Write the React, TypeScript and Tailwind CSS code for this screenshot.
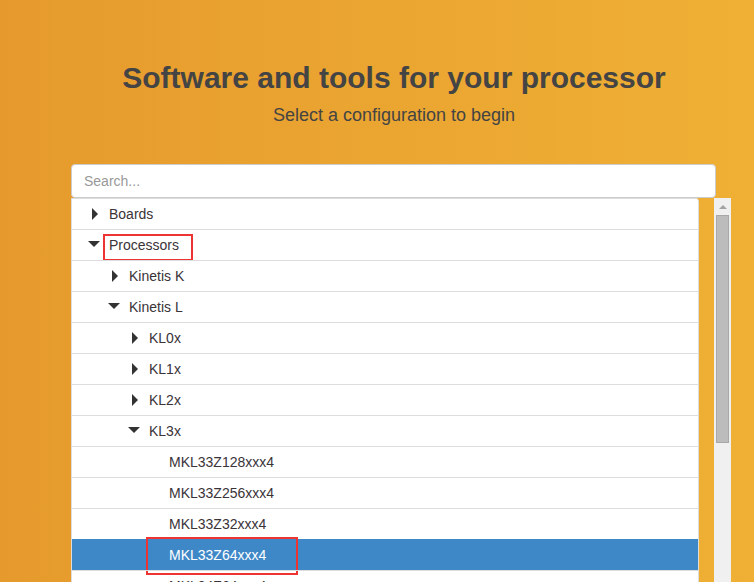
import React from 'react'

type Row = {
  label: string
  level: number
  kind: 'closed' | 'open' | 'leaf'
  selected?: boolean
  marked?: boolean
}

const rows: Row[] = [
  { label: 'Boards', level: 0, kind: 'closed' },
  { label: 'Processors', level: 0, kind: 'open', marked: true },
  { label: 'Kinetis K', level: 1, kind: 'closed' },
  { label: 'Kinetis L', level: 1, kind: 'open' },
  { label: 'KL0x', level: 2, kind: 'closed' },
  { label: 'KL1x', level: 2, kind: 'closed' },
  { label: 'KL2x', level: 2, kind: 'closed' },
  { label: 'KL3x', level: 2, kind: 'open' },
  { label: 'MKL33Z128xxx4', level: 3, kind: 'leaf' },
  { label: 'MKL33Z256xxx4', level: 3, kind: 'leaf' },
  { label: 'MKL33Z32xxx4', level: 3, kind: 'leaf' },
  { label: 'MKL33Z64xxx4', level: 3, kind: 'leaf', selected: true, marked: true },
  { label: 'MKL34Z64xxx4', level: 3, kind: 'leaf' },
]

const pad = ['pl-[12px]', 'pl-[32px]', 'pl-[52px]', 'pl-[72px]']

function Caret({ kind }: { kind: Row['kind'] }) {
  return (
    <span className="w-[25px] shrink-0 flex items-center">
      {kind === 'closed' && (
        <span className="ml-[8px] block w-0 h-0 border-y-[6px] border-y-transparent border-l-[6px] border-l-[#333]" />
      )}
      {kind === 'open' && (
        <span className="ml-[4px] mt-[-2px] block w-0 h-0 border-x-[6px] border-x-transparent border-t-[6px] border-t-[#333]" />
      )}
    </span>
  )
}

function TreeRow({ row }: { row: Row }) {
  return (
    <div
      className={`relative h-[31px] flex items-center border-t text-[14px] ${pad[row.level]} ${
        row.selected ? 'bg-[#3f88c8] border-[#3f88c8] text-white' : 'border-[#dddddd] text-[#3a3338]'
      }`}
    >
      <Caret kind={row.kind} />
      <span>{row.label}</span>
      {row.marked && row.level === 0 && (
        <span className="absolute left-[31px] top-[4px] w-[90px] h-[27px] border-2 border-[#ee3333]" />
      )}
      {row.marked && row.level === 3 && (
        <span className="absolute left-[74px] top-[-3px] w-[152px] h-[38px] border-2 border-[#ee3333]" />
      )}
    </div>
  )
}

export default function App() {
  return (
    <div className="h-[582px] w-full overflow-hidden bg-gradient-to-r from-[#e69a2d] to-[#efb035] font-['Liberation_Sans',Arial,sans-serif]">
      <div className="pt-[61px] pl-[34px] text-center text-[#444]">
        <h1 className="text-[30px] leading-[34px] font-bold">Software and tools for your processor</h1>
        <p className="mt-[9px] text-[18px] leading-[22px]">Select a configuration to begin</p>
      </div>

      <div className="ml-[71px] mt-[38px]">
        {/* search */}
        <div className="w-[645px] h-[34px] bg-white border border-[#cccccc] rounded-[4px] flex items-center px-[12px] text-[14px] text-[#999]">
          Search...
        </div>

        <div className="flex">
          <div className="w-[628px] shrink-0 bg-white border-x border-[#dddddd] rounded-tr-[4px] overflow-hidden">
            {rows.map((r) => (
              <TreeRow key={r.label} row={r} />
            ))}
          </div>

          {/* scrollbar */}
          <div className="ml-[15px] w-[17px] shrink-0 h-[400px] bg-[#f0f0f0] flex flex-col items-center">
            <div className="h-[17px] flex items-center justify-center">
              <span className="block w-0 h-0 border-x-[4px] border-x-transparent border-b-[4px] border-b-[#a3a3a3]" />
            </div>
            <div className="w-[13px] h-[228px] bg-[#bcbcbc] border border-[#a8a8a8]" />
          </div>
        </div>
      </div>
    </div>
  )
}
